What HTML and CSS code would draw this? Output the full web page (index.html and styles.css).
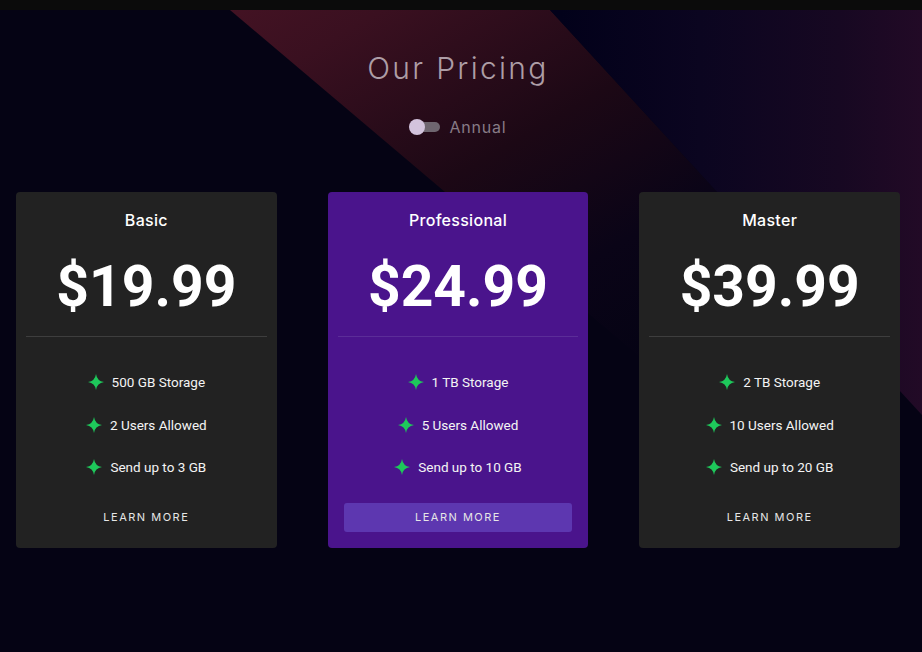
FILE: index.html
```html
<!DOCTYPE html>
<html lang="en">
<head>
<meta charset="utf-8">
<title>Our Pricing</title>
<link rel="stylesheet" href="styles.css">
</head>
<body>
<div class="backdrop" aria-hidden="true">
  <div class="shape shape-red"></div>
  <div class="shape shape-purple"></div>
</div>
<div class="topbar"></div>
<main class="pricing">
  <h1 class="heading">Our Pricing</h1>
  <div class="toggle-row">
    <span class="toggle"><span class="toggle-track"></span><span class="toggle-thumb"></span></span>
    <span class="toggle-label">Annual</span>
  </div>
  <section class="plans">
    <article class="plan">
      <h2 class="plan-name">Basic</h2>
      <div class="plan-price">$19.99</div>
      <hr class="plan-divider">
      <ul class="features">
        <li><svg class="star" viewBox="0 0 16 16"><path d="M8 0Q9 7 16 8Q9 9 8 16Q7 9 0 8Q7 7 8 0Z"/></svg>500 GB Storage</li>
        <li><svg class="star" viewBox="0 0 16 16"><path d="M8 0Q9 7 16 8Q9 9 8 16Q7 9 0 8Q7 7 8 0Z"/></svg>2 Users Allowed</li>
        <li><svg class="star" viewBox="0 0 16 16"><path d="M8 0Q9 7 16 8Q9 9 8 16Q7 9 0 8Q7 7 8 0Z"/></svg>Send up to 3 GB</li>
      </ul>
      <a class="btn" href="#">Learn More</a>
    </article>
    <article class="plan plan-featured">
      <h2 class="plan-name">Professional</h2>
      <div class="plan-price">$24.99</div>
      <hr class="plan-divider">
      <ul class="features">
        <li><svg class="star" viewBox="0 0 16 16"><path d="M8 0Q9 7 16 8Q9 9 8 16Q7 9 0 8Q7 7 8 0Z"/></svg>1 TB Storage</li>
        <li><svg class="star" viewBox="0 0 16 16"><path d="M8 0Q9 7 16 8Q9 9 8 16Q7 9 0 8Q7 7 8 0Z"/></svg>5 Users Allowed</li>
        <li><svg class="star" viewBox="0 0 16 16"><path d="M8 0Q9 7 16 8Q9 9 8 16Q7 9 0 8Q7 7 8 0Z"/></svg>Send up to 10 GB</li>
      </ul>
      <a class="btn btn-filled" href="#">Learn More</a>
    </article>
    <article class="plan">
      <h2 class="plan-name">Master</h2>
      <div class="plan-price">$39.99</div>
      <hr class="plan-divider">
      <ul class="features">
        <li><svg class="star" viewBox="0 0 16 16"><path d="M8 0Q9 7 16 8Q9 9 8 16Q7 9 0 8Q7 7 8 0Z"/></svg>2 TB Storage</li>
        <li><svg class="star" viewBox="0 0 16 16"><path d="M8 0Q9 7 16 8Q9 9 8 16Q7 9 0 8Q7 7 8 0Z"/></svg>10 Users Allowed</li>
        <li><svg class="star" viewBox="0 0 16 16"><path d="M8 0Q9 7 16 8Q9 9 8 16Q7 9 0 8Q7 7 8 0Z"/></svg>Send up to 20 GB</li>
      </ul>
      <a class="btn" href="#">Learn More</a>
    </article>
  </section>
</main>
</body>
</html>
```
FILE: styles.css
```css
* { box-sizing: border-box; }

html, body {
  margin: 0;
  height: 100%;
}

body {
  background: #050314;
  font-family: "Roboto", "Liberation Sans", sans-serif;
  color: #fff;
  overflow: hidden;
  position: relative;
}

.backdrop {
  position: absolute;
  inset: 0;
  z-index: 0;
  pointer-events: none;
}

.shape {
  position: absolute;
  inset: 0;
}

.shape-red {
  clip-path: polygon(230px 10px, 550px 10px, 922px 415px, 922px 596px);
  background: linear-gradient(150deg, #511628 0px, #3a1020 200px, #1c0815 380px, #0a0417 520px, #050314 640px);
}

.shape-purple {
  clip-path: polygon(550px 10px, 922px 10px, 922px 415px);
  background: linear-gradient(90deg, #02011a 560px, #0b0520 700px, #170822 840px, #220a26 922px);
}

.topbar {
  position: relative;
  z-index: 1;
  height: 10px;
  background: #0b0b0b;
}

.pricing {
  position: relative;
  z-index: 1;
  padding-right: 6px;
}

.heading {
  margin: 40px 0 0;
  text-align: center;
  font-family: "Inter", "Noto Sans", sans-serif;
  font-weight: 300;
  font-size: 30px;
  line-height: 36px;
  color: #ad9da6;
  letter-spacing: 2.3px;
}

.toggle-row {
  margin-top: 31px;
  height: 20px;
  display: flex;
  justify-content: center;
  align-items: center;
  gap: 9px;
}

.toggle {
  position: relative;
  width: 31px;
  height: 16px;
  display: inline-block;
}

.toggle-track {
  position: absolute;
  left: 2px;
  right: 0;
  top: 3px;
  height: 10px;
  border-radius: 5px;
  background: #6f6670;
}

.toggle-thumb {
  position: absolute;
  left: 0;
  top: 0;
  width: 16px;
  height: 16px;
  border-radius: 50%;
  background: #d3c3dd;
}

.toggle-label {
  font-family: "Inter", "Noto Sans", sans-serif;
  font-size: 16px;
  color: #877b86;
  letter-spacing: 0.8px;
}

.plans {
  margin-top: 55px;
  padding: 0 16px;
  display: grid;
  grid-template-columns: repeat(3, 1fr);
  column-gap: 51px;
}

.plan {
  height: 356px;
  background: #222222;
  border-radius: 4px;
  padding: 18px 10px 0;
  display: flex;
  flex-direction: column;
  align-items: stretch;
  text-align: center;
}

.plan-featured {
  background: #4a148c;
}

.plan-name {
  margin: 0;
  font-family: "Inter", "Noto Sans", sans-serif;
  font-weight: 500;
  font-size: 16px;
  line-height: 20px;
  color: #fff;
  letter-spacing: 0.3px;
}

.plan-price {
  margin-top: 25px;
  font-family: "Roboto", sans-serif;
  font-weight: 700;
  font-size: 57px;
  line-height: 64px;
  color: #fff;
}

.plan-divider {
  margin: 17px 0 0;
  border: 0;
  height: 1px;
  background: #3e3e3e;
}

.plan-featured .plan-divider {
  background: #5b2d98;
}

.features {
  list-style: none;
  margin: 35px 0 0;
  padding: 0;
  display: flex;
  flex-direction: column;
  gap: 22.5px;
}

.features li {
  display: flex;
  justify-content: center;
  align-items: center;
  gap: 8px;
  height: 20px;
  font-family: "Roboto", sans-serif;
  font-weight: 400;
  font-size: 13.5px;
  color: #f4f4f4;
}

.star {
  width: 16px;
  height: 16px;
  fill: #1ec85b;
  flex: none;
}

.btn {
  margin: 26px 6px 0;
  height: 29px;
  padding-bottom: 2px;
  display: flex;
  align-items: center;
  justify-content: center;
  border-radius: 3px;
  font-family: "Inter", "Noto Sans", sans-serif;
  font-weight: 400;
  font-size: 11px;
  letter-spacing: 1.5px;
  text-transform: uppercase;
  color: #e6e6e6;
  text-decoration: none;
}

.btn-filled {
  background: #5d37b0;
}
```
